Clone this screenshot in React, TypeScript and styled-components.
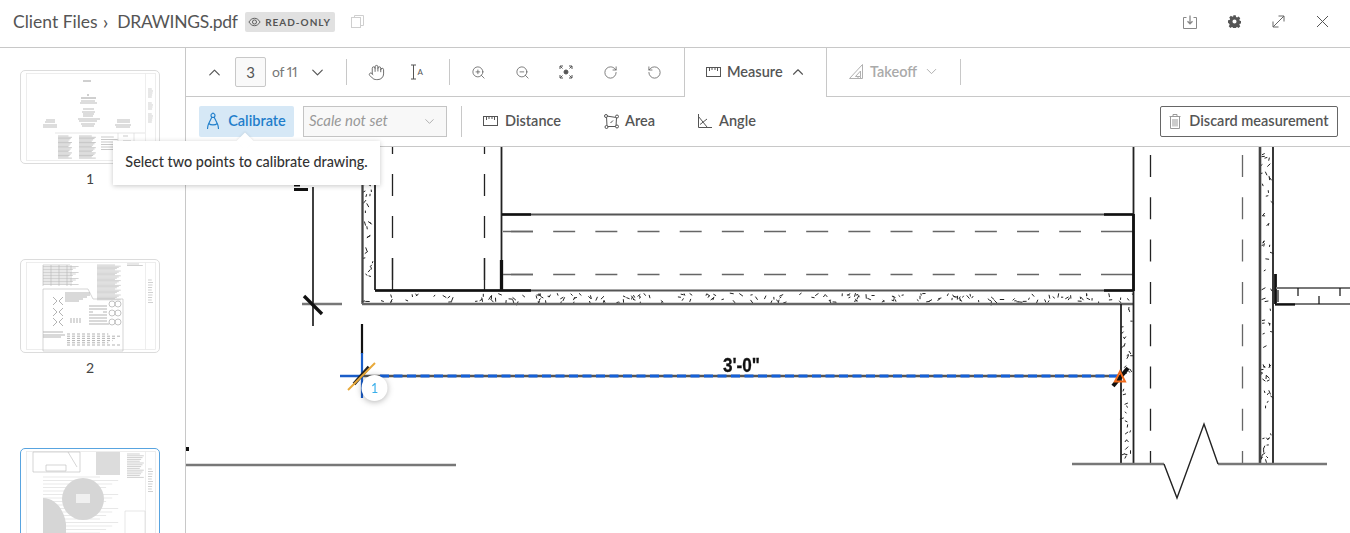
import React from "react";
import styled, { createGlobalStyle } from "styled-components";
import { ChevronDown, ChevronUp, Hand, RotateCcw, RotateCw, ZoomIn, ZoomOut } from "lucide-react";

const GlobalStyle = createGlobalStyle`
  html, body {
    margin: 0;
    padding: 0;
    height: 100%;
    overflow: hidden;
    background: #fff;
  }
  #root {
    height: 100%;
  }
  * {
    box-sizing: border-box;
  }
`;

const Page = styled.div`
  width: 1350px;
  height: 533px;
  display: flex;
  flex-direction: column;
  overflow: hidden;
  font-family: "Lato", "Liberation Sans", sans-serif;
  color: #555;
`;

const Header = styled.header`
  flex: none;
  height: 48px;
  display: flex;
  align-items: center;
  padding: 0 6px 4px 13px;
  border-bottom: 1px solid #c8c8c8;
`;

const Crumb = styled.span`
  font-size: 17.5px;
  color: #555;
`;

const FileName = styled(Crumb)`
  letter-spacing: -0.3px;
`;

const CrumbSep = styled.span`
  font-size: 20px;
  color: #555;
  margin: 0 9px 2px 5px;
`;

const Badge = styled.span`
  margin-left: 7px;
  height: 20px;
  width: 90px;
  display: flex;
  align-items: center;
  justify-content: center;
  gap: 4px;
  background: #e1e1e1;
  border-radius: 2px;
  font-size: 10px;
  font-weight: 700;
  letter-spacing: 1px;
  color: #555;
`;

const CopyBox = styled.span`
  margin-left: 16px;
  display: flex;
`;

const HeaderActions = styled.div`
  margin-left: auto;
  display: flex;
`;

const HeaderButton = styled.span`
  width: 44px;
  height: 30px;
  display: flex;
  align-items: center;
  justify-content: center;
  color: #666;
`;

const Body = styled.div`
  flex: 1;
  min-height: 0;
  display: flex;
`;

const Sidebar = styled.aside`
  flex: none;
  width: 186px;
  border-right: 1px solid #c8c8c8;
  padding: 22px 0 0 20px;
  overflow: hidden;
  display: flex;
  flex-direction: column;
  gap: 32px;
`;

const ThumbItem = styled.div`
  flex: none;
  width: 140px;
  height: 157px;
`;

const ThumbFrame = styled.div<{ $active?: boolean }>`
  width: 140px;
  height: 94px;
  border: 1px solid ${(p) => (p.$active ? "#58a4e0" : "#dcdcdc")};
  border-radius: 5px;
  overflow: hidden;
  background: #fff;
`;

const ThumbArt = styled.svg`
  display: block;
  filter: blur(0.45px);
`;

const ThumbLabel = styled.div`
  margin-top: 6px;
  text-align: center;
  font-size: 14px;
  line-height: 18px;
  color: #444;
`;

const Main = styled.main`
  position: relative;
  flex: 1;
  min-width: 0;
  display: flex;
  flex-direction: column;
`;

const TopBar = styled.div`
  flex: none;
  height: 49px;
  display: flex;
  align-items: center;
  padding-left: 14px;
  border-bottom: 1px solid #c8c8c8;
`;

const ToolButton = styled.span<{ $w?: number; $ml?: number }>`
  flex: none;
  width: ${(p) => p.$w ?? 44}px;
  margin-left: ${(p) => p.$ml ?? 0}px;
  height: 30px;
  display: flex;
  align-items: center;
  justify-content: center;
  color: #555;
`;

const PageInput = styled.span`
  flex: none;
  margin-left: 7px;
  width: 31px;
  height: 30px;
  display: flex;
  align-items: center;
  justify-content: center;
  background: #f9f9f9;
  border: 1px solid #c8c8c8;
  border-radius: 2px;
  font-size: 15px;
  color: #555;
`;

const PageCount = styled.span`
  flex: none;
  width: 25px;
  margin: 0 6px 2px;
  font-size: 14px;
  font-variant-numeric: proportional-nums;
  letter-spacing: -0.4px;
  white-space: nowrap;
  color: #777;
`;

const Separator = styled.span<{ $ml: number; $mr?: number; $h?: number }>`
  flex: none;
  width: 1px;
  height: ${(p) => p.$h ?? 26}px;
  margin-left: ${(p) => p.$ml}px;
  margin-right: ${(p) => p.$mr ?? 0}px;
  background: #c8c8c8;
`;

const MeasureTab = styled.div`
  flex: none;
  align-self: stretch;
  margin: 0 0 -1px 8px;
  width: 143px;
  padding: 0 0 2px 21px;
  display: flex;
  align-items: center;
  background: #fff;
  border-left: 1px solid #c8c8c8;
  border-right: 1px solid #c8c8c8;
  font-size: 14.5px;
  font-weight: 600;
  color: #555;
`;

const TakeoffTab = styled.div`
  flex: none;
  width: 133px;
  padding: 0 0 2px 22px;
  display: flex;
  align-items: center;
  font-size: 14.5px;
  font-weight: 600;
  color: #aaa;
`;

const TabText = styled.span`
  margin: 0 6px;
`;

const SubBar = styled.div`
  flex: none;
  height: 50px;
  display: flex;
  align-items: center;
  padding: 0 12px 1px 13px;
  border-bottom: 1px solid #c8c8c8;
`;

const Label = styled.span`
  padding-bottom: 2px;
`;

const CalibrateButton = styled.span`
  flex: none;
  width: 95px;
  height: 31px;
  display: flex;
  align-items: center;
  justify-content: center;
  gap: 9px;
  background: #d6e8f6;
  border-radius: 2px;
  font-size: 14.5px;
  font-weight: 600;
  color: #1f7ecb;
`;

const ScaleSelect = styled.span`
  flex: none;
  width: 144px;
  height: 31px;
  margin-left: 9px;
  padding: 0 9px 0 5px;
  display: flex;
  align-items: center;
  justify-content: space-between;
  background: #f8f8f8;
  border: 1px solid #c4c4c4;
  font-size: 15px;
  font-style: italic;
  color: #999;
`;

const MeasureTool = styled.span<{ $w: number; $gap?: number }>`
  flex: none;
  width: ${(p) => p.$w}px;
  display: flex;
  align-items: center;
  gap: ${(p) => p.$gap ?? 7}px;
  font-size: 14.5px;
  font-weight: 600;
  color: #555;
`;

const DiscardButton = styled.span`
  flex: none;
  margin-left: auto;
  width: 178px;
  height: 31px;
  display: flex;
  align-items: center;
  justify-content: center;
  gap: 8px;
  border: 1px solid #666;
  border-radius: 2px;
  font-size: 14.5px;
  font-weight: 600;
  color: #555;
`;

const Canvas = styled.div`
  flex: 1;
  min-height: 0;
  overflow: hidden;
  display: flex;
`;

const SheetArt = styled.svg`
  display: block;
  filter: blur(0.35px);
`;

const Tooltip = styled.div`
  position: absolute;
  left: -73px;
  top: 93px;
  width: 267px;
  height: 44px;
  padding-bottom: 4px;
  display: flex;
  align-items: center;
  justify-content: center;
  background: #fff;
  box-shadow: 0 1px 5px rgba(0, 0, 0, 0.22);
  font-size: 14.4px;
  font-weight: 500;
  color: #333;
  z-index: 3;
  &::before {
    content: "";
    position: absolute;
    top: -6px;
    left: 126px;
    width: 12px;
    height: 12px;
    background: #fff;
    transform: rotate(45deg);
    box-shadow: -1px -1px 2px rgba(0, 0, 0, 0.06);
  }
`;

const TooltipText = styled.span`
  position: relative;
`;

const stroke = { fill: "none", stroke: "currentColor", strokeWidth: 1 } as const;

function EyeIcon() {
  return (
    <svg width="13" height="10" viewBox="0 0 14 10" {...stroke}>
      <path d="M1 5c1.600-2.600 3.600-4 6-4s4.400 1.400 6 4c-1.600 2.600-3.600 4-6 4S2.600 7.600 1 5z" />
      <circle cx="7" cy="5" r="2.200" />
    </svg>
  );
}

function CopyIcon() {
  return (
    <svg width="13" height="13" viewBox="0 0 13 13" fill="none" stroke="#cfcfcf">
      <rect x="0.500" y="2.500" width="9" height="10" />
      <path d="M3.500 2.500v-2h9v10h-3" />
    </svg>
  );
}

function DownloadIcon() {
  return (
    <svg width="14" height="14" viewBox="0 0 14 14" fill="none" stroke="#888">
      <path d="M3.500 2.500H.5v11h13v-11h-3" />
      <path d="M7 .5v8M4.500 6.200 7 8.800l2.500-2.600" strokeWidth="1.300" />
    </svg>
  );
}

function GearIcon() {
  return (
    <svg width="13" height="13" viewBox="0 0 14 14" fill="#555">
      <path
        fillRule="evenodd"
        d="M5.700.3h2.600l.4 1.800 1.100.5 1.600-1 1.800 1.800-1 1.600.5 1.100 1.800.4v2.600l-1.800.4-.5 1.100 1 1.600-1.800 1.800-1.600-1-1.100.5-.4 1.800H5.700l-.4-1.800-1.100-.5-1.600 1-1.800-1.800 1-1.600-.5-1.100L0 8.300V5.700l1.800-.4.5-1.100-1-1.600 1.800-1.800 1.600 1 1.100-.5zM7 4.800a2.200 2.200 0 1 0 0 4.400 2.200 2.200 0 0 0 0-4.400z"
      />
    </svg>
  );
}

function ExpandIcon() {
  return (
    <svg width="13" height="13" viewBox="0 0 13 13" {...stroke}>
      <path d="M1 12 12 1M6.500 1H12v5.500M1 6.500V12h5.500" />
    </svg>
  );
}

function CloseIcon() {
  return (
    <svg width="13" height="13" viewBox="0 0 13 13" fill="none" stroke="#555" strokeWidth="1">
      <path d="M1 1l11 11M12 1 1 12" />
    </svg>
  );
}

function TextSelectIcon() {
  return (
    <svg width="16" height="16" viewBox="0 0 16 16">
      <path d="M1 1h5M1 15h5M3.500 1v14" fill="none" stroke="#555" />
      <text x="7.500" y="11" fontSize="8" fontFamily="Lato, sans-serif" fill="#555">
        A
      </text>
    </svg>
  );
}

function FitIcon() {
  return (
    <svg width="14" height="14" viewBox="0 0 14 14" fill="none" stroke="#555">
      <circle cx="7" cy="7" r="2" fill="#555" />
      <path d="M1 4V1h3M10 1h3v3M13 10v3h-3M4 13H1v-3M1 1l2.500 2.500M13 1l-2.500 2.500M13 13l-2.500-2.500M1 13l2.500-2.500" />
    </svg>
  );
}

function RulerIcon() {
  return (
    <svg width="15" height="10" viewBox="0 0 15 10" {...stroke}>
      <rect x="0.500" y="0.500" width="14" height="9" />
      <path d="M3.500.5v3.500M6 .5v2.500M9 .5v2.500M11.500.5v3.500" />
    </svg>
  );
}

function SetSquareIcon() {
  return (
    <svg width="15" height="15" viewBox="0 0 15 15" fill="none" stroke="#b0b0b0">
      <path d="M.5 14.500 13.500.5v14z" />
      <path d="M6.500 12.500 11.500 7v5.500z" />
      <path d="M9 14.500v-2M11.500 14.500v-2" />
    </svg>
  );
}

function CompassIcon() {
  return (
    <svg width="12" height="18" viewBox="0 0 12 18" fill="none" stroke="#1f7ecb" strokeWidth="1.100">
      <circle cx="6" cy="3.500" r="2" />
      <path d="M4.800 5.300 1.500 12c-.6 1.300-.9 2.500-1 5M7.200 5.300 10.500 12c.6 1.300.9 2.500 1 5M1.800 11.500c1.800 1.800 6.600 1.800 8.400 0" />
      <path d="M6 .5v1" />
    </svg>
  );
}

function AreaIcon() {
  return (
    <svg width="15" height="15" viewBox="0 0 15 15" {...stroke}>
      <path d="M2.500 2 12.500 3.500 12 12.500 3 12.500z" />
      <circle cx="2" cy="2" r="1.500" fill="#fff" />
      <circle cx="13" cy="2.500" r="1.500" fill="#fff" />
      <circle cx="13" cy="12.500" r="1.500" fill="#fff" />
      <circle cx="2.500" cy="13" r="1.500" fill="#fff" />
      <path d="M6.500 9 9 6.500" />
    </svg>
  );
}

function AngleIcon() {
  return (
    <svg width="14" height="14" viewBox="0 0 14 14" {...stroke}>
      <path d="M.5 0v13.500H14M.5 2.500 9 13M2 10.500 9 5" />
    </svg>
  );
}

function TrashIcon() {
  return (
    <svg width="12" height="15" viewBox="0 0 12 15" fill="none" stroke="#999">
      <path d="M.5 2.500h11M4 2.500V.5h4v2M1.500 2.500v12h9v-12M4 5v7.500M6 5v7.500M8 5v7.500" />
    </svg>
  );
}

function seeded(seed: number) {
  let s = seed;
  return () => {
    s = (s * 16807) % 2147483647;
    return s / 2147483647;
  };
}

type Band = [number, number, number, number, number];

function speckles(bands: Band[]) {
  const rnd = seeded(4711);
  let d = "";
  bands.forEach(([x, y, w, h, n]) => {
    for (let i = 0; i < n; i++) {
      const px = x + rnd() * w;
      const py = y + rnd() * h;
      const a = rnd() * Math.PI;
      const l = 2 + rnd() * 2.500;
      d += `M${px.toFixed(1)} ${py.toFixed(1)}l${(Math.cos(a) * l).toFixed(1)} ${(Math.sin(a) * l).toFixed(1)}`;
    }
  });
  return d;
}

const concrete = speckles([
  [364, 293, 768, 9, 190],
  [364, 147, 9, 142, 32],
  [1123, 306, 8, 157, 34],
  [1262, 147, 9, 316, 68],
]);

function DrawingSheet() {
  return (
    <SheetArt width="1164" height="387" viewBox="186 147 1164 387" fill="none">
      <path d={concrete} stroke="#222" strokeWidth="1" />

      {/* left corridor */}
      <path d="M362.500 147v157" stroke="#444" strokeWidth="2.300" />
      <path d="M375 147v143" stroke="#222" strokeWidth="1.800" />
      <path d="M392.500 132V290M484.500 132V290" stroke="#222" strokeWidth="1.300" strokeDasharray="22 20" />
      <path d="M392.500 258v32M484.500 258v32" stroke="#222" strokeWidth="1.300" />
      <path d="M501.500 147v113" stroke="#222" strokeWidth="1.800" />
      <path d="M501.500 260v31" stroke="#111" strokeWidth="3.300" />

      {/* hallway */}
      <path d="M502 214.500h631" stroke="#555" strokeWidth="1.800" />
      <path d="M502 214.500h29M1104 214.500h29" stroke="#111" strokeWidth="2.300" />
      <path d="M511 231.500h570M511 274.500h570" stroke="#666" strokeWidth="1.400" strokeDasharray="22 20.170" />
      <path d="M503 231.500h30M503 274.500h30M1101 231.500h32M1101 274.500h32" stroke="#666" strokeWidth="1.400" />
      <path d="M375 290.500h758" stroke="#555" strokeWidth="1.800" />
      <path d="M375 290.500h156M1104 290.500h29" stroke="#111" strokeWidth="2.300" />
      <path d="M362 304h772" stroke="#666" strokeWidth="2.300" />

      {/* right corridor */}
      <path d="M1133.500 147v318" stroke="#222" strokeWidth="1.800" />
      <path d="M1133.500 214v77" stroke="#111" strokeWidth="2.800" />
      <path d="M1121 304v161" stroke="#222" strokeWidth="1.800" />
      <path d="M1150.500 155V464" stroke="#222" strokeWidth="1.300" strokeDasharray="22 20.300" />
      <path d="M1242.500 155V464" stroke="#666" strokeWidth="1.300" strokeDasharray="22 20.300" />
      <path d="M1260 147v318" stroke="#444" strokeWidth="2.600" />
      <path d="M1273 147v318" stroke="#222" strokeWidth="1.800" />
      <path d="M1275.500 274v30" stroke="#111" strokeWidth="2.800" />
      <path d="M1276 288h74M1276 304h74" stroke="#777" strokeWidth="1.800" />
      <path d="M1275 304.500h20" stroke="#111" strokeWidth="2.300" />
      <path d="M1278 290v12M1298 288v8M1319 296v8M1340 288v8" stroke="#111" strokeWidth="1.200" />

      {/* break line */}
      <path d="M1072 464h92M1218 464h109" stroke="#777" strokeWidth="2.300" />
      <path d="M1164 464 1177 498 1204 424 1218 464" stroke="#222" strokeWidth="1.400" />

      {/* left dimension */}
      <path d="M313 187v139" stroke="#111" strokeWidth="1.600" />
      <path d="M302 304h40" stroke="#777" strokeWidth="2.300" />
      <path d="M304 296 322 314" stroke="#111" strokeWidth="3.300" />
      <path d="M294 189.500h14" stroke="#111" strokeWidth="3" />
      <path d="M294 185.500h6" stroke="#111" strokeWidth="2" />

      <path d="M186 465h270" stroke="#777" strokeWidth="2.300" />
      <rect x="186" y="447" width="3" height="4" fill="#111" />

      {/* calibration line */}
      <path d="M362 324v30" stroke="#111" strokeWidth="2.200" />
      <path d="M362 353v45" stroke="#1a5dc8" strokeWidth="2.200" />
      <path d="M340 376h24" stroke="#1a5dc8" strokeWidth="2.500" />
      <path d="M364 376h756" stroke="#555" strokeWidth="2.500" />
      <path d="M380 376h740" stroke="#1560d8" strokeWidth="3" strokeDasharray="9 4.500" />
      <path d="M354 384 369 367" stroke="#222" strokeWidth="3.500" />
      <path d="M348 390 375 363" stroke="#e8a93a" strokeWidth="2" />
      <path d="M1113 386 1128 368" stroke="#111" strokeWidth="4" />
      <path d="M1120 371.500 1125 381.500H1115z" stroke="#f26a1b" strokeWidth="2" fill="none" />
      <text
        x="723"
        y="372"
        textLength="37"
        lengthAdjust="spacingAndGlyphs"
        fontFamily="Liberation Sans, sans-serif"
        fontWeight="700"
        fontSize="21"
        fill="#111"
        stroke="#111"
        strokeWidth="0.300"
      >
        3'-0"
      </text>

      <circle cx="374.500" cy="388" r="13" fill="#fff" style={{ filter: "drop-shadow(0 1px 3px rgba(0,0,0,.3))" }} />
      <text x="374.500" y="393" textAnchor="middle" fontFamily="Lato, sans-serif" fontSize="12.500" fill="#38aeea">
        1
      </text>
    </SheetArt>
  );
}

function textBlock(x: number, y: number, w: number, rows: number, gap = 1.500) {
  let d = "";
  for (let i = 0; i < rows; i++) {
    d += `M${x} ${y + i * gap}h${(w * (0.75 + ((i * 7) % 4) * 0.08)).toFixed(1)}`;
  }
  return d;
}

function Sheet({ children }: { children: React.ReactNode }) {
  return (
    <ThumbArt width="138" height="92" viewBox="0 0 138 92" fill="none">
      <rect x="5.500" y="2.500" width="129" height="87" stroke="#e6e6e6" strokeWidth="0.700" />
      <path d="M124.500 2.500v87" stroke="#e6e6e6" strokeWidth="0.700" />
      {children}
    </ThumbArt>
  );
}

function CoverThumb() {
  return (
    <Sheet>
      <g stroke="#aaa" strokeWidth="0.800">
        <path d="M62 10h8M66 24h2M60 27h15" stroke="#888" />
        <path d="M60 30h14M59 32h17M62 38h11M61 41h13M62 43h11M62 45h10" />
        <path d="M25 49h9M24 51h10M22 54h14M22 56h14M57 48h22M58 50h18M60 53h14M61 55h12" />
        <path d="M96 49h13M96 51h13M94 54h16M95 56h14" />
      </g>
      <g stroke="#bbb" strokeWidth="0.800">
        <path d={textBlock(37, 65, 14, 18, 1.300)} />
        <path d={textBlock(58, 65, 17, 18, 1.300)} />
        <path d={textBlock(80, 66, 17, 6, 2.500)} />
        <path d="M97 62v28M34 62h90M113 62v28" stroke="#d5d5d5" strokeWidth="0.600" />
        <path d="M102 65h5M102 70h8M102 75h3M102 79h7" />
      </g>
      <path d={textBlock(127, 18, 5, 5, 2) + textBlock(127, 32, 5, 4, 2) + textBlock(127, 43, 5, 5, 2)} stroke="#bbb" strokeWidth="0.700" />
    </Sheet>
  );
}

function PlanThumb() {
  return (
    <Sheet>
      <g stroke="#b5b5b5" strokeWidth="0.600">
        <path d={textBlock(22, 5, 36, 14, 1.500)} />
        <path d="M22 5v21M30 5v21M38 5v21M46 5v21M50 5v21" />
        <path d={textBlock(76, 5, 24, 30, 1.200)} />
      </g>
      <path d="M22 29h45l5 10h30v52H22z" stroke="#bbb" strokeWidth="0.600" />
      <g stroke="#aaa" strokeWidth="0.900">
        <path d="M44 33h25M44 35h25M44 37h22M44 39h18M44 41h14" />
        <path d="M32 37l4 4-4 4M42 37l-4 4 4 4M32 48l4 4-4 4M42 48l-4 4 4 4M32 58l4 4-4 4M42 58l-4 4 4 4" />
        <path d="M68 46h18M68 49h18M68 52h4M82 52h4M68 55h18M68 58h18M68 61h18M68 64h20" />
        <path d="M50 58v5M53 58v5M56 58v5M59 58v5" />
        <path d="M22 72h20M22 75h22M22 77h18" />
        <path d={textBlock(46, 74, 55, 6, 2.200)} strokeDasharray="3 2" />
      </g>
      <g fill="none" stroke="#b5b5b5" strokeWidth="0.800">
        <circle cx="91" cy="44" r="3" />
        <circle cx="97" cy="44" r="3" />
        <circle cx="91" cy="53" r="3" />
        <circle cx="97" cy="53" r="3" />
        <circle cx="91" cy="62" r="3" />
        <circle cx="97" cy="62" r="3" />
      </g>
      <path d={textBlock(106, 4, 16, 2, 1.500) + textBlock(127, 20, 5, 10, 2.500)} stroke="#bbb" strokeWidth="0.700" />
    </Sheet>
  );
}

function SeatingThumb() {
  return (
    <Sheet>
      <path d="M12 3h47v20H12zM25 16h20v6H25zM47 3l9 15" stroke="#bbb" strokeWidth="0.600" />
      <rect x="75" y="3" width="24" height="23" fill="#dcdcdc" />
      <path d={textBlock(106, 5, 17, 14, 1.800)} stroke="#bbb" strokeWidth="0.700" />
      <path d={textBlock(22, 28, 76, 24, 3.500)} stroke="#d0d0d0" strokeWidth="0.500" />
      <circle cx="62" cy="50" r="21" fill="#d6d6d6" />
      <rect x="55" y="45" width="14" height="9" fill="#f0f0f0" />
      <path d="M22 49c11 0 21 10 23 26v17H22z" fill="#d6d6d6" />
      <path d={textBlock(127, 20, 5, 10, 2.500)} stroke="#bbb" strokeWidth="0.700" />
      <path d="M104 62h20v30h-20z" stroke="#ccc" strokeWidth="0.500" />
    </Sheet>
  );
}

// the third label sits below the fold, so it is not rendered
const thumbs = [
  { id: 1, label: "1", art: <CoverThumb /> },
  { id: 2, label: "2", art: <PlanThumb /> },
  { id: 3, art: <SeatingThumb />, active: true },
];

export default function App() {
  return (
    <>
      <GlobalStyle />
      <Page>
        <Header>
          <Crumb>Client Files</Crumb>
          <CrumbSep>›</CrumbSep>
          <FileName>DRAWINGS.pdf</FileName>
          <Badge>
            <EyeIcon />
            READ-ONLY
          </Badge>
          <CopyBox>
            <CopyIcon />
          </CopyBox>
          <HeaderActions>
            <HeaderButton>
              <DownloadIcon />
            </HeaderButton>
            <HeaderButton>
              <GearIcon />
            </HeaderButton>
            <HeaderButton>
              <ExpandIcon />
            </HeaderButton>
            <HeaderButton>
              <CloseIcon />
            </HeaderButton>
          </HeaderActions>
        </Header>
        <Body>
          <Sidebar>
            {thumbs.map((t) => (
              <ThumbItem key={t.id}>
                <ThumbFrame $active={t.active}>{t.art}</ThumbFrame>
                {t.label && <ThumbLabel>{t.label}</ThumbLabel>}
              </ThumbItem>
            ))}
          </Sidebar>
          <Main>
            <TopBar>
              <ToolButton $w={28}>
                <ChevronUp size={19} strokeWidth={1.500} />
              </ToolButton>
              <PageInput>3</PageInput>
              <PageCount>of 11</PageCount>
              <ToolButton $w={28}>
                <ChevronDown size={19} strokeWidth={1.500} />
              </ToolButton>
              <Separator $ml={15} />
              <ToolButton $w={42} $ml={8}>
                <Hand size={17} strokeWidth={1.200} />
              </ToolButton>
              <ToolButton $w={42}>
                <TextSelectIcon />
              </ToolButton>
              <Separator $ml={10} $mr={6} />
              <ToolButton>
                <ZoomIn size={15} strokeWidth={1.200} />
              </ToolButton>
              <ToolButton>
                <ZoomOut size={15} strokeWidth={1.200} />
              </ToolButton>
              <ToolButton>
                <FitIcon />
              </ToolButton>
              <ToolButton>
                <RotateCw size={15} strokeWidth={1.200} />
              </ToolButton>
              <ToolButton>
                <RotateCcw size={15} strokeWidth={1.200} />
              </ToolButton>
              <MeasureTab>
                <RulerIcon />
                <TabText>Measure</TabText>
                <ChevronUp size={18} strokeWidth={1.500} />
              </MeasureTab>
              <TakeoffTab>
                <SetSquareIcon />
                <TabText>Takeoff</TabText>
                <ChevronDown size={17} strokeWidth={1.300} />
              </TakeoffTab>
              <Separator $ml={0} />
            </TopBar>
            <SubBar>
              <CalibrateButton>
                <CompassIcon />
                <Label>Calibrate</Label>
              </CalibrateButton>
              <ScaleSelect>
                <Label>Scale not set</Label>
                <ChevronDown size={15} strokeWidth={1.200} />
              </ScaleSelect>
              <Separator $ml={14} $mr={21} $h={31} />
              <MeasureTool $w={121}>
                <RulerIcon />
                <Label>Distance</Label>
              </MeasureTool>
              <MeasureTool $w={94} $gap={6}>
                <AreaIcon />
                <Label>Area</Label>
              </MeasureTool>
              <MeasureTool $w={100}>
                <AngleIcon />
                <Label>Angle</Label>
              </MeasureTool>
              <DiscardButton>
                <TrashIcon />
                <Label>Discard measurement</Label>
              </DiscardButton>
            </SubBar>
            <Canvas>
              <DrawingSheet />
            </Canvas>
            <Tooltip>
              <TooltipText>Select two points to calibrate drawing.</TooltipText>
            </Tooltip>
          </Main>
        </Body>
      </Page>
    </>
  );
}
